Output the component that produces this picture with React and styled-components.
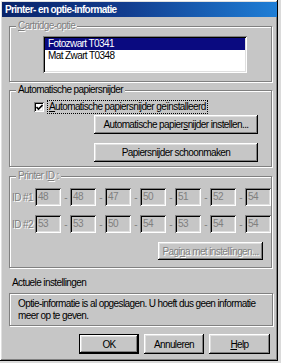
import React from 'react';
import styled, { createGlobalStyle, css } from 'styled-components';

const GlobalStyle = createGlobalStyle`
  html, body {
    margin: 0;
    padding: 0;
    background: #dadada;
  }
  body {
    font-family: "Liberation Sans", Arial, sans-serif;
    font-size: 10px;
    letter-spacing: -0.6px;
    color: #000;
    white-space: nowrap;
  }
`;

const GREY = '#c6c6c6';

const raised = css`
  box-shadow: inset -1px -1px 0 #000, inset 1px 1px 0 #fff,
    inset -2px -2px 0 #808080, inset 2px 2px 0 #dfdfdf;
`;

const sunken = css`
  box-shadow: inset 1px 1px 0 #808080, inset -1px -1px 0 #fff,
    inset 2px 2px 0 #000, inset -2px -2px 0 #dfdfdf;
`;

const Dialog = styled.div`
  width: 278px;
  height: 361px;
  box-sizing: border-box;
  background: ${GREY};
  ${raised};
  padding: 2px 1px 0 2px;
  display: flex;
  flex-direction: column;
`;

const TitleBar = styled.div`
  height: 15px;
  display: flex;
  align-items: center;
  padding-left: 3px;
  background: linear-gradient(to right, #0a246a 0%, #123d8f 45%, #1e7ed6 100%);
  color: #fff;
  font-weight: bold;
  font-size: 10px;
`;

const Body = styled.div`
  padding: 0 5px 0 7px;
  display: flex;
  flex-direction: column;
`;

const Group = styled.div`
  position: relative;
  box-sizing: border-box;
  margin-top: ${p => p.$top}px;
  height: ${p => p.$height}px;
  border: 1px solid #808080;
  box-shadow: inset 1px 1px 0 #fff, 1px 1px 0 #fff;
`;

const Legend = styled.span`
  position: absolute;
  top: -7px;
  left: 6px;
  padding: 0 2px;
  background: ${GREY};
  line-height: 12px;
  color: ${p => (p.$disabled ? '#808080' : '#000')};
  text-shadow: ${p => (p.$disabled ? '1px 1px 0 #fff' : 'none')};
`;

const ListBox = styled.div`
  box-sizing: border-box;
  margin: 9px 0 0 33px;
  width: 204px;
  height: 37px;
  background: #fff;
  padding: 2px;
  ${sunken};
`;

const ListItem = styled.div`
  height: 12px;
  line-height: 12px;
  padding-left: 3px;
  background: ${p => (p.$selected ? '#0a0a80' : 'transparent')};
  color: ${p => (p.$selected ? '#fff' : '#000')};
`;

const CheckRow = styled.label`
  display: flex;
  align-items: center;
  margin: 10px 0 0 24px;
  height: 12px;
`;

const CheckBox = styled.span`
  box-sizing: border-box;
  width: 10px;
  height: 10px;
  background: #fff;
  ${sunken};
  display: flex;
  align-items: center;
  justify-content: center;
  margin-right: 4px;
`;

const FocusLabel = styled.span`
  outline: 1px dotted #000;
  padding: 0 1px;
  line-height: 12px;
`;

const Button = styled.div`
  box-sizing: border-box;
  width: ${p => p.$width}px;
  height: ${p => p.$height || 19}px;
  display: flex;
  align-items: center;
  justify-content: center;
  background: ${GREY};
  ${raised};
  color: ${p => (p.$disabled ? '#808080' : '#000')};
  text-shadow: ${p => (p.$disabled ? '1px 1px 0 #fff' : 'none')};
  ${p =>
    p.$default &&
    css`
      border: 1px solid #000;
    `}
`;

const ButtonStack = styled.div`
  display: flex;
  flex-direction: column;
  gap: 9px;
  margin: 2px 0 0 84px;
`;

const IdRow = styled.div`
  display: flex;
  align-items: center;
  margin-top: ${p => p.$top}px;
  padding-left: 2px;
`;

const IdLabel = styled.span`
  width: 23px;
  color: #808080;
  text-shadow: 1px 1px 0 #fff;
`;

const Field = styled.div`
  box-sizing: border-box;
  width: 26px;
  height: 18px;
  padding: 3px 0 0 3px;
  color: #808080;
  ${sunken};
`;

const Dash = styled.span`
  width: 9px;
  text-align: center;
  color: #808080;
`;

const RightRow = styled.div`
  display: flex;
  justify-content: flex-end;
  margin: 9px 8px 0 0;
`;

const Caption = styled.div`
  margin: 9px 0 0 3px;
  line-height: 12px;
`;

const InfoBox = styled.div`
  box-sizing: border-box;
  margin: 4px -1px 0 0;
  height: 33px;
  padding: 4px 8px 0 8px;
  border: 1px solid #808080;
  box-shadow: inset 1px 1px 0 #fff, 1px 1px 0 #fff;
  line-height: 12px;
`;

const Footer = styled.div`
  display: flex;
  justify-content: flex-end;
  gap: 5px;
  margin: 8px 2px 0 0;
`;

const U = styled.span`
  text-decoration: underline;
`;

const id1 = ['48', '48', '47', '50', '51', '52', '54'];
const id2 = ['53', '53', '50', '54', '53', '54', '54'];

function IdFields({ label, values, top }) {
  return (
    <IdRow $top={top}>
      <IdLabel>{label}</IdLabel>
      {values.map((v, i) => (
        <React.Fragment key={i}>
          {i > 0 && <Dash>-</Dash>}
          <Field>{v}</Field>
        </React.Fragment>
      ))}
    </IdRow>
  );
}

export default function App() {
  return (
    <>
      <GlobalStyle />
      <Dialog>
        <TitleBar>Printer- en optie-informatie</TitleBar>
        <Body>
          <Group $top={9} $height={56}>
            <Legend $disabled><U>C</U>artridge-optie</Legend>
            <ListBox>
              <ListItem $selected>Fotozwart T0341</ListItem>
              <ListItem>Mat Zwart T0348</ListItem>
            </ListBox>
          </Group>

          <Group $top={8} $height={77}>
            <Legend>Automatische papiersnijder</Legend>
            <CheckRow>
              <CheckBox>
                <svg width="7" height="7" viewBox="0 0 7 7">
                  <path d="M0.5 3 L2.5 5 L6.5 1" stroke="#000" strokeWidth="1.6" fill="none" />
                </svg>
              </CheckBox>
              <FocusLabel><U>A</U>utomatische papiersnijder geïnstalleerd</FocusLabel>
            </CheckRow>
            <ButtonStack>
              <Button $width={164}><span>Automatische papier<U>s</U>nijder instellen...</span></Button>
              <Button $width={164}><span>Papiersnijder schoonmaken</span></Button>
            </ButtonStack>
          </Group>

          <Group $top={9} $height={92}>
            <Legend $disabled>Printer I<U>D</U> :</Legend>
            <IdFields label="ID #1" values={id1} top={11} />
            <IdFields label="ID #2" values={id2} top={9} />
            <RightRow>
              <Button $width={105} $height={18} $disabled>
                <span>Pagi<U>n</U>a met instellingen...</span>
              </Button>
            </RightRow>
          </Group>

          <Caption>Actuele instellingen</Caption>
          <InfoBox>
            Optie-informatie is al opgeslagen. U hoeft dus geen informatie
            <br />
            meer op te geven.
          </InfoBox>

          <Footer>
            <Button $width={60} $height={20} $default><span>OK</span></Button>
            <Button $width={60} $height={20}><span>Annuleren</span></Button>
            <Button $width={61} $height={20}><span><U>H</U>elp</span></Button>
          </Footer>
        </Body>
      </Dialog>
    </>
  );
}
